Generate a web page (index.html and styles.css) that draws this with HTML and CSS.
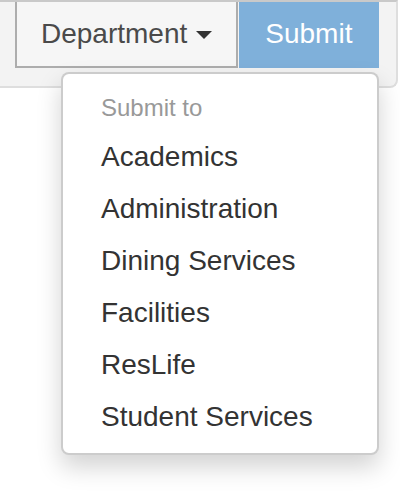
FILE: index.html
```html
<!DOCTYPE html>
<html>
<head>
<meta charset="utf-8">
<link rel="stylesheet" href="styles.css">
</head>
<body>
<div class="panel">
  <div class="group">
    <button class="btn btn-dept">Department<span class="caret"></span></button>
    <button class="btn btn-submit">Submit</button>
  </div>
</div>
<ul class="menu">
  <li class="menu-header">Submit to</li>
  <li class="menu-item">Academics</li>
  <li class="menu-item">Administration</li>
  <li class="menu-item">Dining Services</li>
  <li class="menu-item">Facilities</li>
  <li class="menu-item">ResLife</li>
  <li class="menu-item">Student Services</li>
</ul>
</body>
</html>
```

FILE: styles.css
```css
html, body {
  margin: 0;
  padding: 0;
  background: #ffffff;
  font-family: "Liberation Sans", Arial, sans-serif;
}

body {
  position: relative;
  width: 400px;
  height: 500px;
  overflow: hidden;
}

.panel {
  box-sizing: border-box;
  width: 398px;
  background: #f3f3f3;
  border-top: 2px solid #c9c9c9;
  border-right: 2px solid #dedede;
  border-bottom: 2px solid #dedede;
  border-bottom-right-radius: 8px;
  padding: 0 0 18px 15px;
}

.group {
  display: flex;
}

.btn {
  font-family: "Liberation Sans", Arial, sans-serif;
  font-size: 28px;
  line-height: 40px;
  margin: 0;
  padding: 12px 24px;
  display: flex;
  align-items: center;
  cursor: pointer;
  border-radius: 0;
}

.btn-dept {
  background: #f6f6f6;
  color: #4a4a4a;
  border: 2px solid #adadad;
  border-top: 0;
}

.caret {
  display: inline-block;
  width: 0;
  height: 0;
  margin-left: 9px;
  margin-top: 2px;
  border-top: 8px solid #333333;
  border-left: 8px solid transparent;
  border-right: 8px solid transparent;
}

.btn-submit {
  background: #7fb0da;
  color: #ffffff;
  border: 0;
  padding: 12px 27px 14px 26px;
  margin-left: 1px;
}

.menu {
  position: absolute;
  top: 72px;
  left: 61px;
  box-sizing: border-box;
  width: 318px;
  margin: 0;
  padding: 10px 0;
  list-style: none;
  background: #ffffff;
  border: 2px solid rgba(0, 0, 0, 0.2);
  border-radius: 8px;
  box-shadow: 0 12px 24px rgba(0, 0, 0, 0.175);
}

.menu-header {
  padding: 6px 38px;
  font-size: 24px;
  line-height: 35px;
  color: #999999;
}

.menu-item {
  padding: 6px 38px;
  font-size: 28px;
  line-height: 40px;
  color: #333333;
}
```
